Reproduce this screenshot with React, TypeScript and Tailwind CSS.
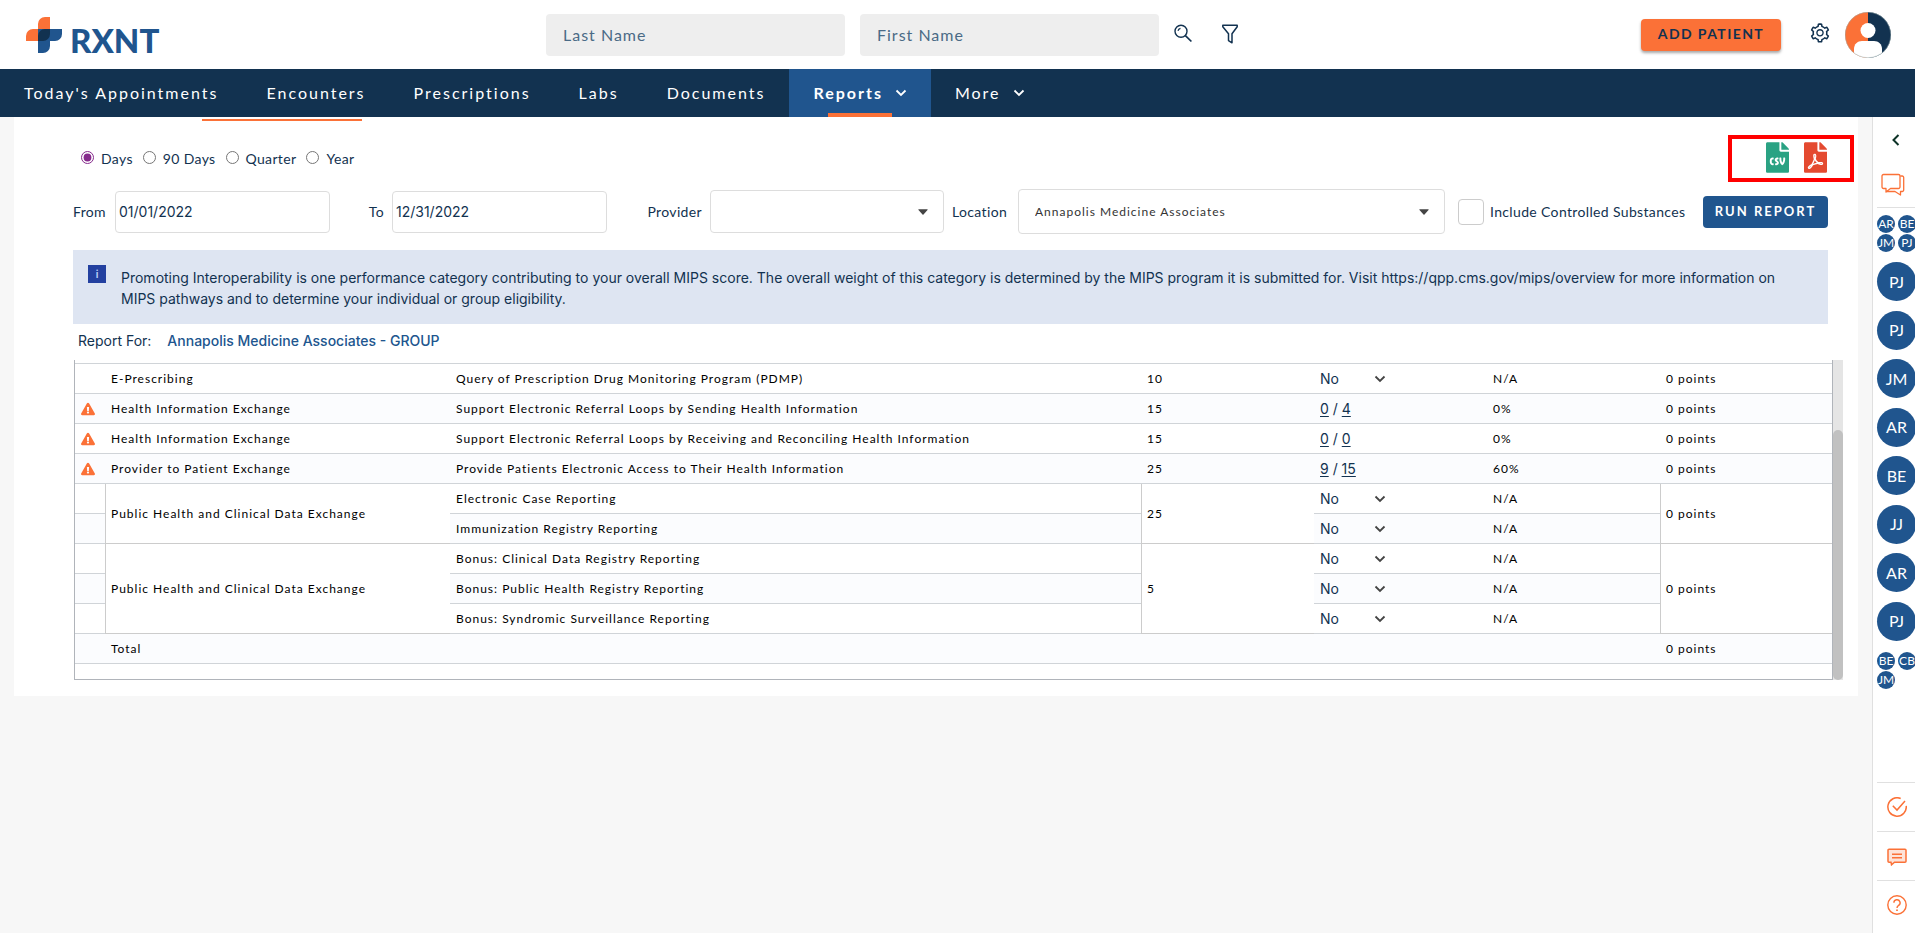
import { type ReactNode } from 'react';
import { FaFileCsv, FaFilePdf, FaExclamationTriangle } from 'react-icons/fa';
import { AiOutlineSetting } from 'react-icons/ai';

const Chevron = ({ className }: { className: string }) => (
  <svg viewBox="0 0 12 8" className={className} fill="none" stroke="currentColor" strokeWidth="1.8">
    <path d="M1.5 1.5 6 6l4.5-4.5" />
  </svg>
);

const Caret = () => (
  <svg viewBox="0 0 10 6" className="pointer-events-none absolute right-4 top-1/2 h-[6px] w-[10px] -translate-y-1/2 fill-[#444]">
    <path d="M.8.3h8.4c.4 0 .6.5.3.8L5.5 5.4c-.3.3-.7.3-1 0L.5 1.1C.2.8.4.3.8.3z" />
  </svg>
);

const Logo = () => (
  <a href="#home" aria-label="RXNT home" className="flex w-[546px] items-center gap-2 pl-[26px]">
    <svg viewBox="0 0 36 36" className="size-9">
      <path d="M12 12V7a7 7 0 0 1 7-7h5v24H0v-5a7 7 0 0 1 7-7z" fill="#fb7137" />
      <path d="M12 12h24v5a7 7 0 0 1-7 7h-5v5a7 7 0 0 1-7 7h-5z" fill="#20558e" />
      <path d="M12 24v-5a7 7 0 0 1 7-7h5v5a7 7 0 0 1-7 7z" fill="#123250" />
    </svg>
    <span className="pt-[10px] text-[33px] leading-[28px] font-black text-[#20558e]">RXNT</span>
  </a>
);

const Header = () => (
  <header className="flex h-[69px] items-center bg-white">
    <Logo />
    <form className="flex items-center gap-[15px] pt-px">
      <input aria-label="Last Name" placeholder="Last Name" className="h-[42px] w-[299px] rounded-[4px] bg-[#eee] px-[17px] pb-[2px] text-base tracking-[1px] text-[#123250] placeholder:text-[#4a6a86]" />
      <input aria-label="First Name" placeholder="First Name" className="h-[42px] w-[299px] rounded-[4px] bg-[#eee] px-[17px] pb-[2px] text-base tracking-[1px] text-[#123250] placeholder:text-[#4a6a86]" />
      <button type="button" aria-label="Search" className="mb-[3px]">
        <svg viewBox="0 0 20 20" className="size-5 text-[#123250]" fill="none" stroke="currentColor" strokeWidth="1.4">
          <circle cx="7" cy="7.2" r="6" />
          <path d="M4 6.900a3.200 3.200 0 0 1 2.500-2.600" strokeWidth="1.2" />
          <path d="m11.400 11.600 6 5.900" strokeWidth="1.700" />
        </svg>
      </button>
      <button type="button" aria-label="Filter" className="mb-[3px] ml-[12px]">
        <svg viewBox="0 0 18 20" className="h-5 w-[18px] text-[#123250]" fill="none" stroke="currentColor" strokeWidth="1.5" strokeLinejoin="round">
          <path d="M1.800 1.200h14.400v1.500L11 9.800v9l-3.500-2.200V9.800L1.800 2.700z" />
        </svg>
      </button>
    </form>
    <div className="ml-auto flex items-center justify-end pr-6">
      <button type="button" className="h-8 w-[140px] rounded-[4px] bg-[#fb7137] pb-[2px] text-sm font-bold tracking-widest text-[#123250] shadow-[0_2px_3px_rgba(0,0,0,0.35)]">ADD PATIENT</button>
      <button type="button" aria-label="Settings" className="mb-[3px] ml-[28px] text-[#123250]">
        <AiOutlineSetting size={22} />
      </button>
      <button type="button" aria-label="Account" className="ml-[14px]">
        <svg viewBox="0 0 46 46" className="size-[46px]">
          <clipPath id="avatar"><circle cx="23" cy="23" r="23" /></clipPath>
          <g clipPath="url(#avatar)">
            <path d="M0 0h23v46H0z" fill="#fb7137" />
            <path d="M23 0h23v46H23z" fill="#123250" />
            <circle cx="23" cy="18.5" r="7.5" fill="#fff" />
            <path d="M9 46v-9c0-5 3.500-8 8-8h12c4.500 0 8 3 8 8v9z" fill="#fff" />
          </g>
          <circle cx="23" cy="23" r="22.700" fill="none" stroke="#9aa" strokeWidth=".5" />
        </svg>
      </button>
    </div>
  </header>
);

const navItems = ["Today's Appointments", 'Encounters', 'Prescriptions', 'Labs', 'Documents'];

const Nav = () => (
  <nav className="flex h-12 bg-[#123250] text-base tracking-[2px] text-white">
    {navItems.map((item) => (
      <a key={item} href="#nav" className="flex items-center px-6">{item}</a>
    ))}
    <a href="#reports" className="relative flex items-center bg-[#20558e] px-6 font-bold">
      Reports
      <Chevron className="ml-3 h-2 w-3" />
      <span className="absolute bottom-0 left-1/2 h-1 w-16 -translate-x-1/2 bg-[#fb7137]" />
    </a>
    <a href="#more" className="flex items-center px-6">
      More
      <Chevron className="ml-3 h-2 w-3" />
    </a>
  </nav>
);

const Filters = () => (
  <div className="flex items-center text-sm text-[#123250]">
    <label htmlFor="from" className="w-[42px] shrink-0 tracking-wide">From</label>
    <input id="from" defaultValue="01/01/2022" className="h-[42px] w-[215px] rounded-[4px] border border-[#ddd] px-[3px] font-[Inter,sans-serif]" />
    <label htmlFor="to" className="w-[62px] shrink-0 pr-2 text-right tracking-wide">To</label>
    <input id="to" defaultValue="12/31/2022" className="h-[42px] w-[215px] rounded-[4px] border border-[#ddd] px-[3px] font-[Inter,sans-serif]" />
    <label htmlFor="provider" className="w-[103px] shrink-0 pr-2 text-right tracking-wide">Provider</label>
    <div className="relative w-[234px]">
      <select id="provider" className="h-[43px] w-full appearance-none rounded-[4px] border border-[#ddd] bg-white px-4"><option></option></select>
      <Caret />
    </div>
    <label htmlFor="location" className="w-[74px] shrink-0 pl-2 tracking-wide">Location</label>
    <div className="relative min-w-0 flex-1">
      <select id="location" className="h-[45px] w-full appearance-none rounded-[4px] border border-[#ddd] bg-white px-4 text-xs tracking-[1px] text-[#333]"><option>Annapolis Medicine Associates</option></select>
      <Caret />
    </div>
    <label className="ml-[13px] flex w-[233px] shrink-0 items-center gap-[6px] tracking-wide">
      <input type="checkbox" className="size-[26px] shrink-0 appearance-none rounded-[4px] border border-[#ccc] bg-white checked:bg-[#20558e]" />
      Include Controlled Substances
    </label>
    <button type="button" className="ml-3 h-8 w-[125px] shrink-0 rounded-[4px] bg-[#20558e] text-[13px] font-bold tracking-[2px] text-white">RUN REPORT</button>
  </div>
);

type Row = {
  warn?: boolean;
  objective?: string;
  span?: number;
  measure: string;
  max?: string;
  counts?: [string, string];
  rate: string;
};

const rows: Row[] = [
  { objective: 'E-Prescribing', measure: 'Query of Prescription Drug Monitoring Program (PDMP)', max: '10', rate: 'N/A' },
  { warn: true, objective: 'Health Information Exchange', measure: 'Support Electronic Referral Loops by Sending Health Information', max: '15', counts: ['0', '4'], rate: '0%' },
  { warn: true, objective: 'Health Information Exchange', measure: 'Support Electronic Referral Loops by Receiving and Reconciling Health Information', max: '15', counts: ['0', '0'], rate: '0%' },
  { warn: true, objective: 'Provider to Patient Exchange', measure: 'Provide Patients Electronic Access to Their Health Information', max: '25', counts: ['9', '15'], rate: '60%' },
  { objective: 'Public Health and Clinical Data Exchange', span: 2, measure: 'Electronic Case Reporting', max: '25', rate: 'N/A' },
  { measure: 'Immunization Registry Reporting', rate: 'N/A' },
  { objective: 'Public Health and Clinical Data Exchange', span: 3, measure: 'Bonus: Clinical Data Registry Reporting', max: '5', rate: 'N/A' },
  { measure: 'Bonus: Public Health Registry Reporting', rate: 'N/A' },
  { measure: 'Bonus: Syndromic Surveillance Reporting', rate: 'N/A' },
];

const Cell = ({ children, span }: { children?: ReactNode; span?: number }) => (
  <td rowSpan={span} className={span ? 'border-b border-l border-[#ccc] bg-white px-[5px]' : 'border-b border-[#d0d4d8] px-[6px]'}>
    {children}
  </td>
);

const MeasuresTable = () => (
  <div className="mr-[-15px] ml-px flex h-80">
    <div className="min-w-0 flex-1 overflow-hidden border-x border-b border-[#b0b4ba]">
      <table className="w-full table-fixed border-separate border-spacing-0 text-left text-xs tracking-[1px] text-black">
        <colgroup>
          <col className="w-[30px]" />
          <col className="w-[345px]" />
          <col />
          <col className="w-[173px]" />
          <col className="w-[173px]" />
          <col className="w-[173px]" />
          <col className="w-[172px]" />
        </colgroup>
        <tbody>
          <tr className="h-1"><td colSpan={7} className="border-b border-[#d0d4d8]" /></tr>
          {rows.map((row, i) => (
            <tr key={row.measure} className="h-[30px] even:bg-white odd:bg-[#fbfcfe]">
              <Cell>{row.warn && <FaExclamationTriangle aria-label="Warning" size={14} className="text-[#fb7137]" />}</Cell>
              {row.objective && <Cell span={row.span}>{row.objective}</Cell>}
              <Cell>{row.measure}</Cell>
              {row.max && <Cell span={row.span}>{row.max}</Cell>}
              <Cell>
                {row.counts ? (
                  <span className="font-[Inter,sans-serif] text-sm tracking-normal text-[#123250]">
                    <a href="#numerator" className="underline underline-offset-2">{row.counts[0]}</a> / <a href="#denominator" className="underline underline-offset-2">{row.counts[1]}</a>
                  </span>
                ) : (
                  <div className="relative w-[66px]">
                    <select aria-label={`${row.measure} answer ${i + 1}`} className="block h-5 w-full appearance-none bg-transparent font-[Inter,sans-serif] text-sm tracking-normal text-[#123250]">
                      <option>No</option>
                      <option>Yes</option>
                    </select>
                    <Chevron className="pointer-events-none absolute top-[6px] right-0 h-2 w-3 text-[#444]" />
                  </div>
                )}
              </Cell>
              <Cell>{row.rate}</Cell>
              {row.max && <Cell span={row.span}>0 points</Cell>}
            </tr>
          ))}
          <tr className="h-[30px] bg-[#fbfcfe]">
            <Cell />
            <Cell>Total</Cell>
            <Cell /><Cell /><Cell /><Cell />
            <Cell>0 points</Cell>
          </tr>
        </tbody>
      </table>
    </div>
    <div className="flex w-[10px] flex-col justify-end bg-[#e5e5e5]">
      <div className="h-[250px] rounded-full bg-[#c1c1c1]" />
    </div>
  </div>
);

const ranges = ['Days', '90 Days', 'Quarter', 'Year'];

const Report = () => (
  <main className="ml-[14px] min-w-0 flex-1 bg-white pt-[2px] pr-[30px] pb-4 pl-[59px]">
    <div className="ml-[129px] h-[2px] w-40 bg-[#fb7137]" />
    <div className="flex h-[68px] items-center justify-between">
      <fieldset className="flex items-center gap-[10px] pt-[7px] pl-2 text-sm tracking-wide text-[#123250]">
        {ranges.map((range, i) => (
          <label key={range} className="flex items-center gap-[7px]">
            <input type="radio" name="range" defaultChecked={i === 0} className="mb-[3px] size-[13px] accent-[#862a8c]" />
            {range}
          </label>
        ))}
      </fieldset>
      <div className="mr-[-26px] mt-[6px] flex h-[47px] w-[126px] items-center justify-end gap-[15px] border-4 border-[#f00] pr-[23px] pb-px">
        <button type="button" aria-label="Export CSV" className="text-[#2aa283]"><FaFileCsv className="h-[31px] w-[23px]" /></button>
        <button type="button" aria-label="Export PDF" className="text-[#e44a30]"><FaFilePdf className="h-[31px] w-[23px]" /></button>
      </div>
    </div>
    <Filters />
    <section className="mt-4 flex h-[74px] gap-[15px] bg-[#dee5f2] pt-[15px] pr-[30px] pl-[15px] font-[Inter,sans-serif] text-sm leading-[21px] text-[#123250]">
      <span className="flex h-[18px] w-[18px] shrink-0 items-center justify-center bg-[#2340a0] text-[10px] leading-none font-bold text-[#b8cdf5]">i</span>
      <p className="pt-[2px]">
        Promoting Interoperability is one performance category contributing to your overall MIPS score. The overall weight of this category is determined by the MIPS program it is submitted for. Visit https://qpp.cms.gov/mips/overview for more information on MIPS pathways and to determine your individual or group eligibility.
      </p>
    </section>
    <p className="flex h-9 items-center gap-4 pb-[2px] pl-[5px] font-[Inter,sans-serif] text-sm text-[#123250]">
      Report For: <span className="font-medium text-[#20558e]">Annapolis Medicine Associates - GROUP</span>
    </p>
    <MeasuresTable />
  </main>
);

const Dot = ({ children }: { children: string }) => (
  <button type="button" className="flex size-[18px] shrink-0 items-center justify-center rounded-full bg-[#20558e] text-[12px] leading-none text-white">{children}</button>
);

const contacts = ['PJ', 'PJ', 'JM', 'AR', 'BE', 'JJ', 'AR', 'PJ'];

const CheckIcon = () => (
  <svg viewBox="0 0 20 20" className="size-5" fill="none" stroke="currentColor" strokeWidth="1.5">
    <path d="M13.700 1.500a9.200 9.200 0 1 0 5.500 7.300" />
    <path d="m5.800 8.800 4.200 4.300 8-9" />
  </svg>
);

const MessageIcon = () => (
  <svg viewBox="0 0 20 18" className="mt-[2px] h-[18px] w-5" fill="#fde3d8" stroke="currentColor" strokeWidth="1.5">
    <path d="M2 1.200h16a1 1 0 0 1 1 1v11a1 1 0 0 1-1 1H7.500L4.500 16.800 4 14.200H2a1 1 0 0 1-1-1v-11a1 1 0 0 1 1-1z" />
    <path d="M5 6.200h10M5 9.700h10" />
  </svg>
);

const HelpIcon = () => (
  <svg viewBox="0 0 20 20" className="size-5" fill="none" stroke="currentColor" strokeWidth="1.4">
    <circle cx="10" cy="10" r="9.200" />
    <path d="M6.900 7.800a3.100 3 0 1 1 4.700 2.500c-1.100.700-1.600 1.200-1.600 2.600" />
    <path d="M10 14.400v1.700" strokeWidth="1.700" />
  </svg>
);

const tools = [
  { label: 'Tasks', icon: <CheckIcon /> },
  { label: 'Messages', icon: <MessageIcon /> },
  { label: 'Help', icon: <HelpIcon /> },
];

const Sidebar = () => (
  <aside className="ml-[14px] flex w-[43px] shrink-0 flex-col overflow-hidden border-l border-[#e0e0e0] bg-white pl-1">
    <button type="button" aria-label="Expand panel" className="flex h-[46px] items-center justify-center text-[#0d3327]">
      <svg viewBox="0 0 8 12" className="h-3 w-2" fill="none" stroke="currentColor" strokeWidth="2"><path d="M6.500 1 1.500 6l5 5" /></svg>
    </button>
    <button type="button" aria-label="Chats" className="flex h-[45px] items-center border-b border-[#e0e0e0] pl-[4px] text-[#fb7137]">
      <svg viewBox="0 0 24 24" className="size-6" fill="none" stroke="currentColor" strokeWidth="1.300" strokeLinejoin="round">
        <path d="M2.500 1.500h15A1.500 1.500 0 0 1 19 3v11a1.500 1.500 0 0 1-1.500 1.500H9.500L5 19v-3.500H2.500A1.500 1.500 0 0 1 1 14V3a1.500 1.500 0 0 1 1.500-1.500z" />
        <path d="M19.300 3h1.900a1.500 1.500 0 0 1 1.500 1.500v12.500a1.500 1.500 0 0 1-1.500 1.500H19.500v3.500L14 18.500H5.500" />
      </svg>
    </button>
    <div className="mt-[7px] flex flex-col gap-px">
      <div className="flex gap-[3px]"><Dot>AR</Dot><Dot>BE</Dot></div>
      <div className="flex gap-[3px]"><Dot>JM</Dot><Dot>PJ</Dot></div>
    </div>
    <div className="mt-[10px] flex h-[379px] flex-col justify-between">
      {contacts.map((name, i) => (
        <button key={i} type="button" className="flex size-[39px] items-center justify-center rounded-full bg-[#20558e] text-base text-white">{name}</button>
      ))}
    </div>
    <div className="mt-[11px] flex flex-col gap-px">
      <div className="flex gap-[3px]"><Dot>BE</Dot><Dot>CB</Dot></div>
      <Dot>JM</Dot>
    </div>
    <div className="mt-auto pb-1">
      {tools.map((tool) => (
        <button key={tool.label} type="button" aria-label={tool.label} className="flex h-[49px] w-full items-center justify-center border-t border-[#e0e0e0] pl-[2px] text-[#fb7137]">{tool.icon}</button>
      ))}
    </div>
  </aside>
);

export default function App() {
  return (
    <div className="flex min-h-screen flex-col bg-[#f7f7f7] font-[Lato,sans-serif]">
      <Header />
      <Nav />
      <div className="flex flex-1">
        <div className="flex min-w-0 flex-1 items-start"><Report /></div>
        <Sidebar />
      </div>
    </div>
  );
}
